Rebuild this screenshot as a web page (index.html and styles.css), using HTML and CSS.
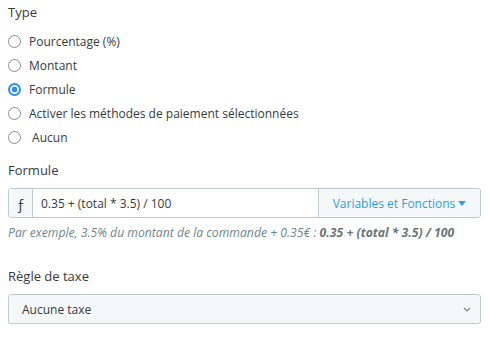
FILE: index.html
```html
<!DOCTYPE html>
<html lang="fr">
<head>
  <meta charset="UTF-8">
  <title>Type de frais</title>
  <link rel="stylesheet" href="styles.css">
</head>
<body>

<div class="form">
  <div class="form-group">
    <label class="form-label">Type</label>
    <div class="radios">
      <label class="radio"><input type="radio" name="type"> Pourcentage (%)</label>
      <label class="radio"><input type="radio" name="type"> Montant</label>
      <label class="radio"><input type="radio" name="type" checked> Formule</label>
      <label class="radio"><input type="radio" name="type"> Activer les méthodes de paiement sélectionnées</label>
      <label class="radio"><input type="radio" name="type"> &nbsp;Aucun</label>
    </div>
  </div>

  <div class="form-group formula">
    <label class="form-label">Formule</label>
    <div class="input-group">
      <span class="addon">ƒ</span>
      <input type="text" class="input" value="0.35 + (total * 3.5) / 100">
      <button class="dropdown">Variables et Fonctions<span class="caret"></span></button>
    </div>
    <p class="help">Par exemple, 3.5% du montant de la commande + 0.35€ : <b>0.35 + (total * 3.5) / 100</b></p>
  </div>

  <div class="form-group tax">
    <label class="form-label">Règle de taxe</label>
    <div class="select">
      <span>Aucune taxe</span>
      <svg width="8" height="5" viewBox="0 0 8 5"><path d="M1 1l3 3 3-3" fill="none" stroke="#6c868e" stroke-width="1.1"/></svg>
    </div>
  </div>
</div>

</body>
</html>
```

FILE: styles.css
```css
:root {
  --text: #363a41;
  --muted: #6c868e;
  --border: #bbcdd2;
  --light: #f5f8f9;
  --primary: #2a9fe0;
  --check: #2b8cf3;
}

body {
  margin: 0;
  padding: 2px 10px 0 8px;
  background: #fff;
  font-family: 'Open Sans', sans-serif;
  color: var(--text);
}

.form-label {
  display: block;
  font-size: 13px;
  line-height: 20px;
}

.radios {
  display: flex;
  flex-direction: column;
  gap: 4px;
  margin-top: 9px;
}

.radio {
  display: flex;
  align-items: center;
  height: 20px;
  font-size: 12px;
}

.radio input {
  appearance: none;
  width: 13px;
  height: 13px;
  margin: 0 8px 0 0;
  border: 1.5px solid #8a8a90;
  border-radius: 50%;
  box-sizing: border-box;
}

.radio input:checked {
  border: 2px solid var(--check);
  background: radial-gradient(circle, var(--check) 0 2.6px, #fff 3.2px);
}

.formula {
  margin-top: 13px;
}

.input-group {
  display: flex;
  height: 30px;
  margin-top: 8px;
  border: 1px solid var(--border);
  border-radius: 3px;
  box-sizing: border-box;
  overflow: hidden;
}

.addon {
  width: 23px;
  display: flex;
  justify-content: center;
  align-items: center;
  background: var(--light);
  border-right: 1px solid var(--border);
  font-size: 14px;
}

.input {
  flex: 1;
  border: none;
  padding: 0 8px;
  font: 12px 'Open Sans', sans-serif;
  color: var(--text);
  outline: none;
}

.dropdown {
  width: 162px;
  border: none;
  border-left: 1px solid var(--border);
  background: var(--light);
  color: var(--primary);
  font: 12px 'Open Sans', sans-serif;
  display: flex;
  align-items: center;
  justify-content: center;
  padding: 0;
}

.caret {
  margin-left: 3px;
  border-left: 4px solid transparent;
  border-right: 4px solid transparent;
  border-top: 5px solid var(--primary);
}

.help {
  margin: 6px 0 0;
  font-size: 12.2px;
  line-height: 18px;
  font-style: italic;
  color: var(--muted);
}

.help b {
  color: #6b7579;
}

.tax {
  margin-top: 24px;
}

.select {
  display: flex;
  justify-content: space-between;
  align-items: center;
  height: 30px;
  margin-top: 8px;
  padding: 0 9px 0 13px;
  border: 1px solid var(--border);
  border-radius: 3px;
  box-sizing: border-box;
  background: var(--light);
  font-size: 12px;
}
```
